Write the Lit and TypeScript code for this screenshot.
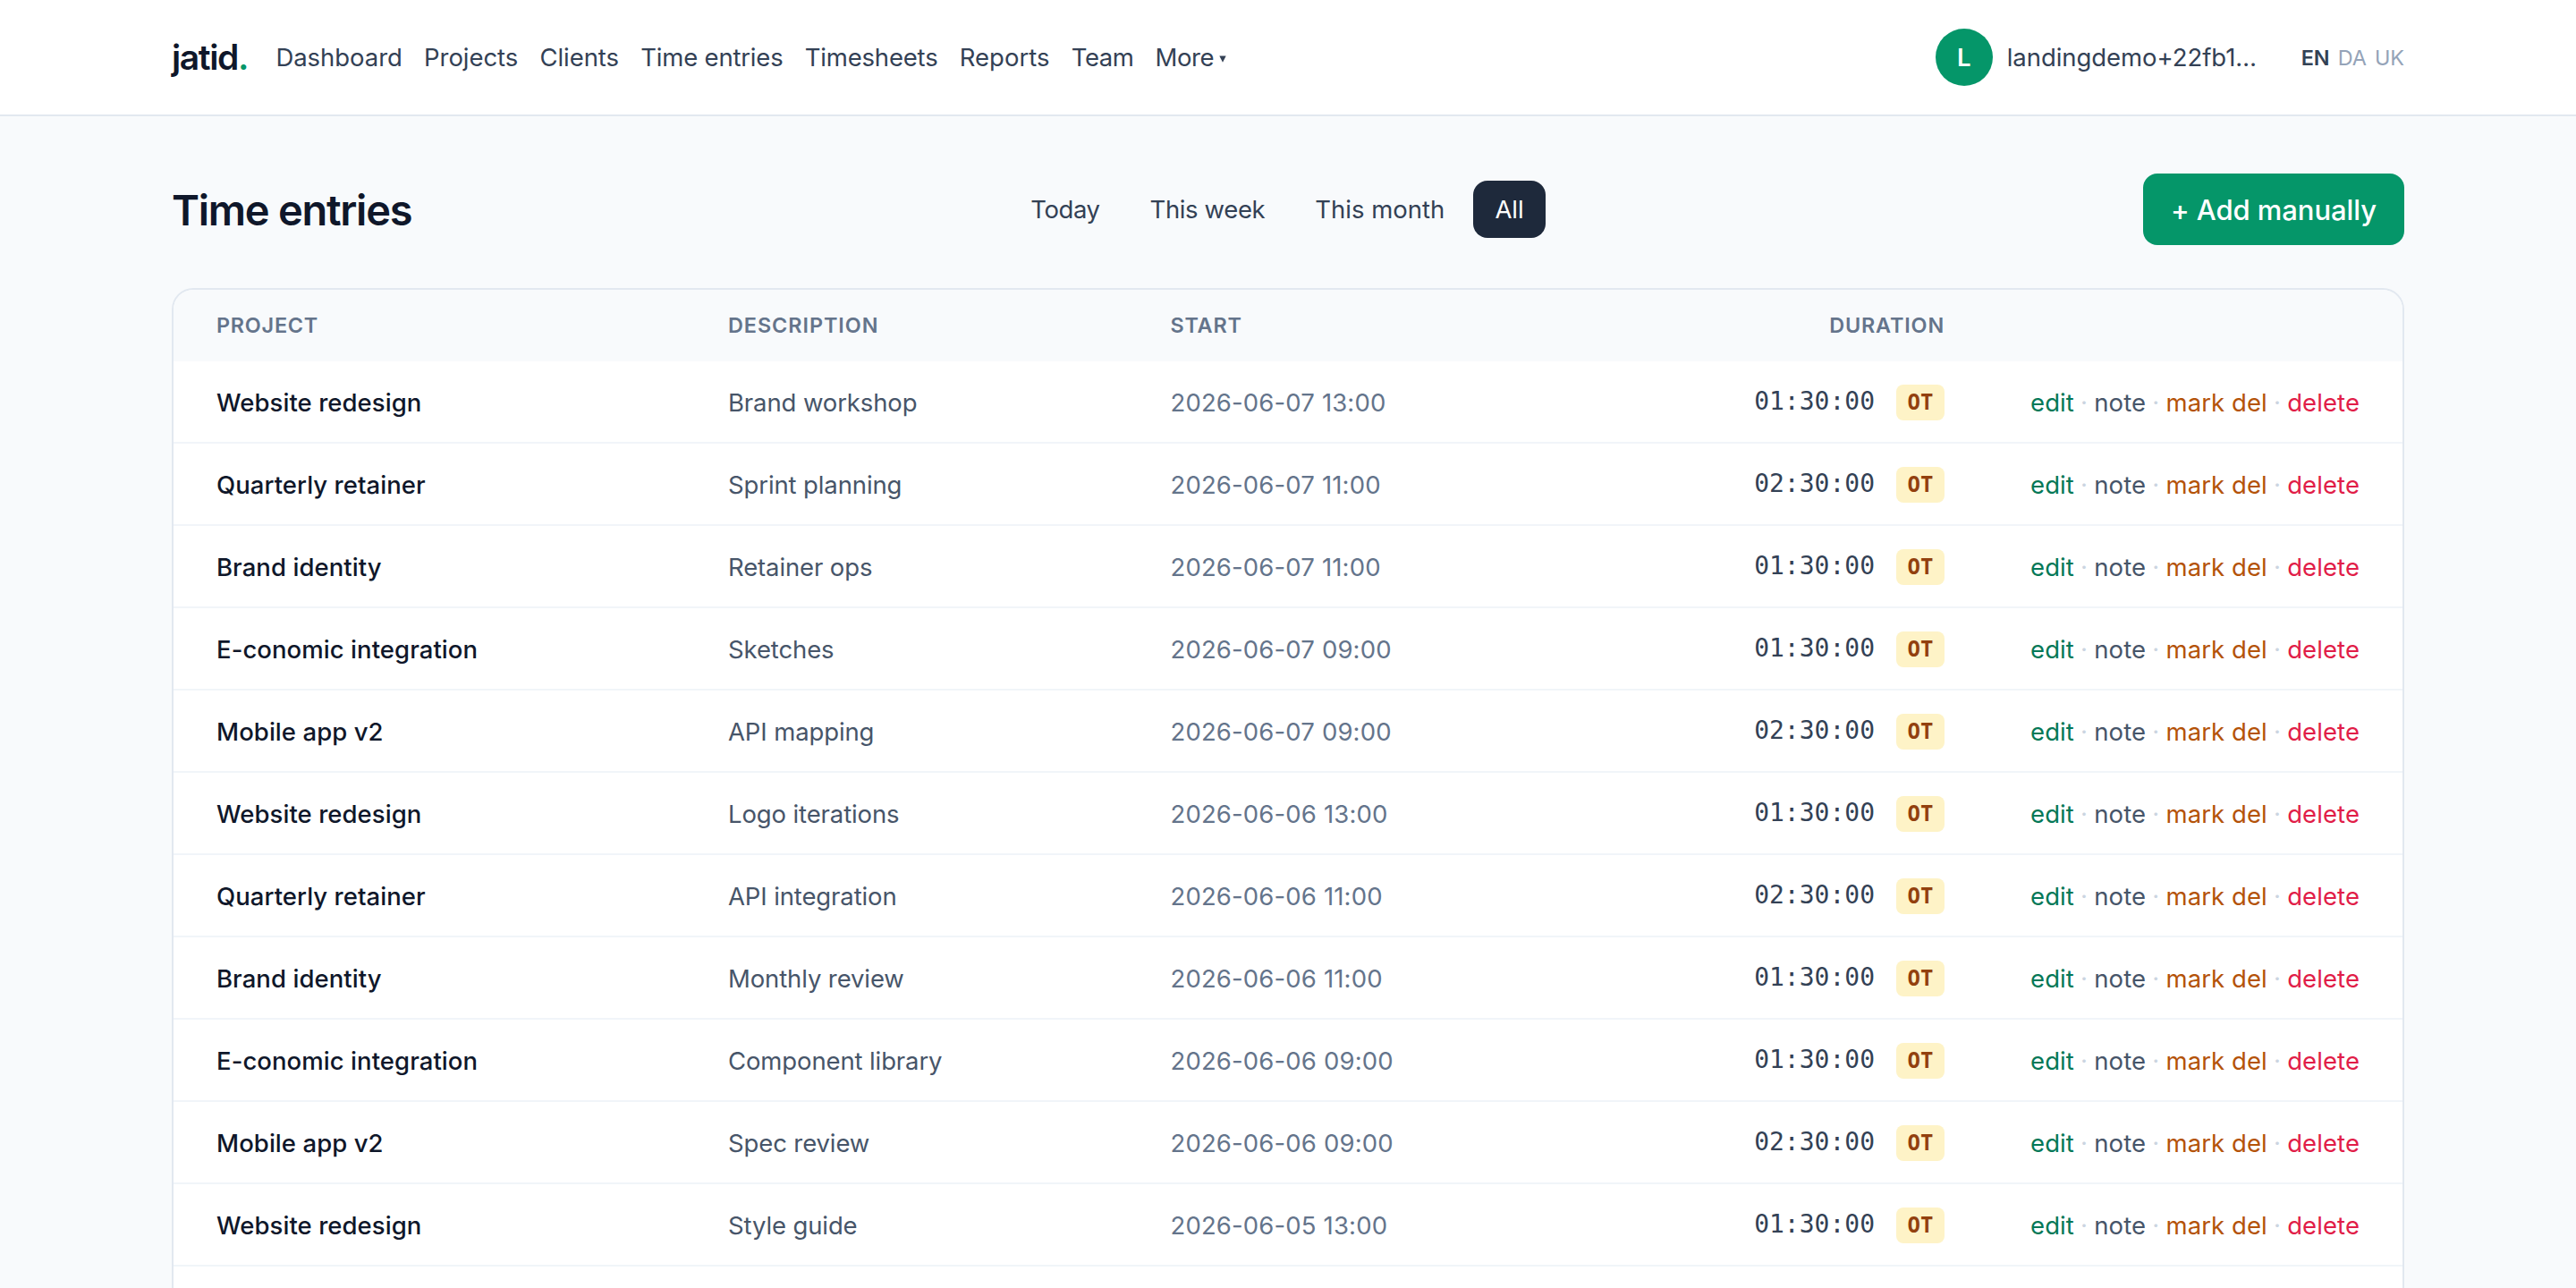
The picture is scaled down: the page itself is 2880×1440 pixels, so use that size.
import { LitElement, html, css, svg } from "lit";
import { customElement } from "lit/decorators.js";
import { classMap } from "lit/directives/class-map.js";
import { styleMap } from "lit/directives/style-map.js";

interface Label {
  text: string;
  tracking: number;
}

interface Entry {
  project: string;
  description: string;
  start: string;
  duration: string;
}

const NAV: Label[] = [
  { text: "Dashboard", tracking: -0.04 },
  { text: "Projects", tracking: -0.06 },
  { text: "Clients", tracking: -0.04 },
  { text: "Time entries", tracking: -0.19 },
  { text: "Timesheets", tracking: -0.18 },
  { text: "Reports", tracking: 0.03 },
  { text: "Team", tracking: -0.5 },
];

const FILTERS: Label[] = [
  { text: "Today", tracking: -0.45 },
  { text: "This week", tracking: -0.36 },
  { text: "This month", tracking: 0 },
  { text: "All", tracking: 0 },
];

const COLUMNS: Label[] = [
  { text: "Project", tracking: 0.75 },
  { text: "Description", tracking: 0.95 },
  { text: "Start", tracking: 0.75 },
  { text: "Duration", tracking: 0.85 },
];

const entry = (project: string, description: string, start: string, duration: string): Entry => ({
  project,
  description,
  start,
  duration,
});

const ENTRIES: Entry[] = [
  entry("Website redesign", "Brand workshop", "2026-06-07 13:00", "01:30:00"),
  entry("Quarterly retainer", "Sprint planning", "2026-06-07 11:00", "02:30:00"),
  entry("Brand identity", "Retainer ops", "2026-06-07 11:00", "01:30:00"),
  entry("E-conomic integration", "Sketches", "2026-06-07 09:00", "01:30:00"),
  entry("Mobile app v2", "API mapping", "2026-06-07 09:00", "02:30:00"),
  entry("Website redesign", "Logo iterations", "2026-06-06 13:00", "01:30:00"),
  entry("Quarterly retainer", "API integration", "2026-06-06 11:00", "02:30:00"),
  entry("Brand identity", "Monthly review", "2026-06-06 11:00", "01:30:00"),
  entry("E-conomic integration", "Component library", "2026-06-06 09:00", "01:30:00"),
  entry("Mobile app v2", "Spec review", "2026-06-06 09:00", "02:30:00"),
  entry("Website redesign", "Style guide", "2026-06-05 13:00", "01:30:00"),
];

const spacing = (l: Label) => styleMap({ letterSpacing: `${l.tracking}px` });

@customElement("site-header")
class SiteHeader extends LitElement {
  static styles = css`
    :host {
      display: block;
      flex: none;
      background: #fff;
      border-bottom: 2px solid #e2e8f0;
    }
    .bar {
      display: flex;
      align-items: center;
      height: 128px;
      padding: 0 192px;
      color: #334155;
      white-space: nowrap;
    }
    .logo {
      width: 116.4px;
      padding-bottom: 2px;
      font-size: 39px;
      font-weight: 600;
      letter-spacing: -1.4px;
      color: #0f172a;
    }
    .dot {
      color: #059669;
    }
    nav {
      display: flex;
      gap: 24.2px;
      flex: 1;
    }
    .more {
      display: flex;
      align-items: center;
      gap: 6px;
      letter-spacing: -0.35px;
    }
    .caret {
      width: 8px;
      height: 8px;
      margin-top: 3px;
      fill: #334155;
    }
    .user {
      display: flex;
      align-items: center;
      gap: 16px;
      margin-right: 48px;
    }
    .avatar {
      display: grid;
      place-items: center;
      width: 64px;
      height: 64px;
      border-radius: 50%;
      background: #059669;
      color: #fff;
      font-weight: 600;
    }
    .email {
      width: 281px;
      letter-spacing: -0.05px;
    }
    .langs {
      display: flex;
      gap: 9px;
      font-size: 23.4px;
      color: #94a3b8;
    }
    .current {
      color: #334155;
      font-weight: 600;
    }
  `;

  render() {
    return html`
      <header class="bar">
        <div class="logo">jatid<span class="dot">.</span></div>
        <nav>
          ${NAV.map((n) => html`<span style=${spacing(n)}>${n.text}</span>`)}
          <span class="more"
            >More<svg class="caret" viewBox="0 0 8 8">${svg`<path d="M.3.5h7.4L4 7.7z" />`}</svg></span
          >
        </nav>
        <div class="user">
          <span class="avatar">L</span>
          <span class="email">landingdemo+22fb1…</span>
        </div>
        <div class="langs"><span class="current">EN</span><span>DA</span><span>UK</span></div>
      </header>
    `;
  }
}

@customElement("entries-toolbar")
class EntriesToolbar extends LitElement {
  static styles = css`
    :host {
      display: flex;
      align-items: center;
      justify-content: space-between;
      white-space: nowrap;
    }
    h1 {
      width: 268px;
      margin: 0;
      font-size: 47px;
      font-weight: 600;
      letter-spacing: -1.27px;
      color: #0f172a;
    }
    .filters {
      display: flex;
      gap: 8px;
    }
    .filter {
      height: 64px;
      line-height: 64px;
      padding: 0 24px;
      border-radius: 16px;
      color: #334155;
    }
    .active {
      background: #1e293b;
      color: #fff;
    }
    .add {
      box-sizing: border-box;
      width: 292px;
      height: 80px;
      border: 0;
      border-radius: 16px;
      padding: 1px 0 0;
      background: #059669;
      color: #fff;
      font-family: inherit;
      font-size: 31px;
      font-weight: 500;
      letter-spacing: -0.08px;
    }
  `;

  render() {
    return html`
      <h1>Time entries</h1>
      <div class="filters">
        ${FILTERS.map(
          (f) =>
            html`<span class=${classMap({ filter: true, active: f.text === "All" })} style=${spacing(f)}>${f.text}</span>`
        )}
      </div>
      <button class="add">+ Add manually</button>
    `;
  }
}

@customElement("entries-table")
class EntriesTable extends LitElement {
  static styles = css`
    :host {
      display: block;
      box-sizing: border-box;
      border: 2px solid #e2e8f0;
      border-bottom: 0;
      border-radius: 24px 24px 0 0;
      background: #fff;
      overflow: hidden;
      white-space: nowrap;
    }
    .row {
      display: grid;
      grid-template-columns: 572px 494.5px 399.5px 466px 1fr;
      align-items: center;
      box-sizing: border-box;
      height: 92px;
      padding: 2px 48px 0;
      border-bottom: 2px solid #f1f5f9;
    }
    .head {
      height: 80px;
      padding-top: 0;
      padding-bottom: 2px;
      border: 0;
      background: #f8fafc;
      color: #64748b;
      font-size: 23.4px;
      font-weight: 600;
      text-transform: uppercase;
    }
    .head :nth-child(4) {
      text-align: right;
    }
    .project {
      color: #0f172a;
      font-weight: 500;
      letter-spacing: 0.06px;
    }
    .description {
      color: #475569;
      letter-spacing: -0.12px;
    }
    .start {
      color: #64748b;
      letter-spacing: 0.15px;
    }
    .duration {
      display: flex;
      align-items: center;
      justify-content: flex-end;
      gap: 24px;
      color: #334155;
      font-family: "DejaVu Sans Mono", monospace;
      font-size: 28px;
    }
    .time {
      padding-bottom: 4px;
    }
    .badge {
      box-sizing: border-box;
      width: 54px;
      height: 40px;
      line-height: 40px;
      border-radius: 8px;
      background: #fef3c7;
      color: #92400e;
      font-size: 24px;
      font-weight: 700;
      text-align: center;
    }
    .actions {
      display: flex;
      justify-content: flex-end;
      letter-spacing: 0.08px;
    }
    .sep {
      width: 22.4px;
      text-align: center;
      color: #cbd5e1;
    }
    .edit {
      color: #047857;
    }
    .note {
      color: #475569;
    }
    .mark {
      color: #b45309;
    }
    .delete {
      color: #e11d48;
    }
  `;

  render() {
    const sep = html`<span class="sep">·</span>`;
    return html`
      <div class="row head">${COLUMNS.map((c) => html`<span style=${spacing(c)}>${c.text}</span>`)}</div>
      ${ENTRIES.map(
        (e) => html`
          <div class="row">
            <span class="project">${e.project}</span>
            <span class="description">${e.description}</span>
            <span class="start">${e.start}</span>
            <span class="duration"><span class="time">${e.duration}</span><span class="badge">OT</span></span>
            <span class="actions"
              ><span class="edit">edit</span>${sep}<span class="note">note</span>${sep}<span class="mark">mark del</span
              >${sep}<span class="delete">delete</span></span
            >
          </div>
        `
      )}
    `;
  }
}

@customElement("app-root")
class AppRoot extends LitElement {
  static styles = css`
    :host {
      display: flex;
      flex-direction: column;
      height: 1440px;
      overflow: hidden;
      background: #f8fafc;
      font-family: Inter, "Liberation Sans", sans-serif;
      font-size: 27.5px;
    }
    main {
      display: flex;
      flex-direction: column;
      flex: 1;
      gap: 48px;
      padding: 64px 192px 0;
    }
    entries-table {
      flex: 1;
    }
  `;

  render() {
    return html`
      <site-header></site-header>
      <main>
        <entries-toolbar></entries-toolbar>
        <entries-table></entries-table>
      </main>
    `;
  }
}
